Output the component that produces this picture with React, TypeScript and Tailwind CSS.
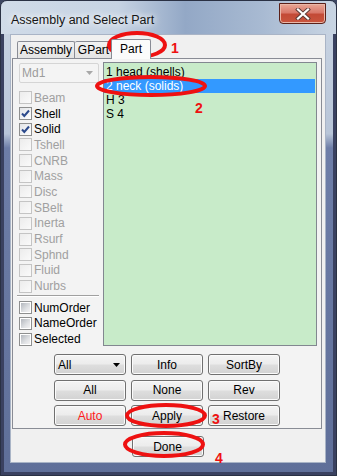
import React from "react";

type Kind = "disabled" | "checked" | "sunken";

const rows: { label: string; kind: Kind }[] = [
  { label: "Beam", kind: "disabled" },
  { label: "Shell", kind: "checked" },
  { label: "Solid", kind: "checked" },
  { label: "Tshell", kind: "disabled" },
  { label: "CNRB", kind: "disabled" },
  { label: "Mass", kind: "disabled" },
  { label: "Disc", kind: "disabled" },
  { label: "SBelt", kind: "disabled" },
  { label: "Inerta", kind: "disabled" },
  { label: "Rsurf", kind: "disabled" },
  { label: "Sphnd", kind: "disabled" },
  { label: "Fluid", kind: "disabled" },
  { label: "Nurbs", kind: "disabled" },
];

const orderRows: { label: string; kind: Kind }[] = [
  { label: "NumOrder", kind: "sunken" },
  { label: "NameOrder", kind: "sunken" },
  { label: "Selected", kind: "sunken" },
];

const parts = ["1 head (shells)", "2 neck (solids)", "H 3", "S 4"];

const btn =
  "flex h-[21px] w-[72px] items-center justify-center rounded-[3px] border border-[#707070] bg-[linear-gradient(180deg,#f4f4f4_0%,#ececec_48%,#dedede_52%,#d2d2d2_100%)] shadow-[inset_0_0_0_1px_#fbfbfb] text-[12px] text-black";

function Box({ kind }: { kind: Kind }) {
  if (kind === "disabled") {
    return <div className="h-[13px] w-[13px] shrink-0 border border-[#c4c4c4] bg-[linear-gradient(135deg,#ececec,#fafafa)]" />;
  }
  if (kind === "checked") {
    return (
      <div className="flex h-[13px] w-[13px] shrink-0 items-center justify-center border border-[#8e8f8f] bg-[linear-gradient(135deg,#e2e4e7,#ffffff)]">
        <svg width="11" height="11" viewBox="0 0 11 11">
          <path d="M2 5.5 L4.3 8 L9 2.5" fill="none" stroke="#2c4a8c" strokeWidth="2" />
        </svg>
      </div>
    );
  }
  return (
    <div className="flex h-[13px] w-[13px] shrink-0 items-center justify-center border border-[#8e8f8f] bg-white">
      <div className="h-[9px] w-[9px] bg-[linear-gradient(135deg,#b3b7bd,#dfe1e4_60%,#f3f3f3)]" />
    </div>
  );
}

function Check({ label, kind }: { label: string; kind: Kind }) {
  return (
    <div className="flex h-[15.7px] items-center gap-[2px]">
      <Box kind={kind} />
      <span className={kind === "disabled" ? "text-[#a0a0a0]" : "text-black"}>{label}</span>
    </div>
  );
}

export default function App() {
  return (
    <div className="relative h-[476px] w-[337px] overflow-hidden bg-[#3d4662] font-['Liberation_Sans',Arial,sans-serif] text-[12px] leading-[14px]">
      <div className="flex h-full flex-col rounded-t-[7px] border border-[#2a3144] bg-[linear-gradient(180deg,#cbd6e4_0%,#b8c5d8_28%,#6e7ea8_31%,#5f6f99_100%)] shadow-[inset_3px_0_0_#3a4160,inset_-3px_0_0_#3a4160,inset_0_-3px_0_#3a4160]">
        {/* title bar */}
        <div className="flex h-[33px] shrink-0 items-start rounded-t-[6px] bg-[linear-gradient(90deg,#d0dbe8_0%,#c6d3e3_35%,#93a8c6_55%,#a8bad2_78%,#c9d5e3_100%)]">
          <span className="pl-[10px] pt-[12px] text-[12.5px] text-[#151515] [text-shadow:0_0_6px_#fff,0_0_10px_#fff]">
            Assembly and Select Part
          </span>
          <div className="ml-auto mr-[10px] mt-[2px] flex h-[21px] w-[47px] items-center justify-center rounded-b-[4px] border border-[#5b2018] bg-[linear-gradient(180deg,#e9a896_0%,#d9786a_45%,#c34a36_55%,#c9553e_100%)] shadow-[inset_0_0_0_1px_#eab7a8]">
            <svg width="16" height="12" viewBox="0 0 16 12">
              <path d="M3 1.5 L13 10.5 M13 1.5 L3 10.5" stroke="#5a3a36" strokeWidth="4" strokeLinecap="square" />
              <path d="M3 1.5 L13 10.5 M13 1.5 L3 10.5" stroke="#ffffff" strokeWidth="2.2" strokeLinecap="square" />
            </svg>
          </div>
        </div>

        {/* client area */}
        <div className="mx-[9px] flex h-[429px] w-[316px] shrink-0 flex-col border border-[#a9b4c6] bg-[#f0f0f0]">
          {/* tab strip */}
          <div className="mt-[4px] flex h-[19px] items-end pl-[6px]">
            <div className="flex h-[17px] w-[58px] items-center justify-center rounded-t-[2px] border border-b-0 border-[#898c95] bg-[linear-gradient(180deg,#f2f2f2,#e3e3e3)]">
              Assembly
            </div>
            <div className="flex h-[17px] w-[38px] items-center justify-center rounded-t-[2px] border border-b-0 border-l-0 border-[#898c95] bg-[linear-gradient(180deg,#f2f2f2,#e3e3e3)]">
              GPart
            </div>
            <div className="relative z-10 -mb-px -ml-[2px] flex h-[20px] w-[40px] items-center justify-center rounded-t-[2px] border border-b-0 border-[#898c95] bg-[#fbfbfb] pb-[2px]">
              Part
            </div>
          </div>

          {/* tab page */}
          <div className="ml-[1px] flex h-[371px] w-[310px] flex-col border border-[#898c95] bg-[#f3f3f3]">
            <div className="flex pl-[6px] pt-[3px]">
              <div className="flex w-[84px] flex-col pt-[1px]">
                <div className="flex h-[20px] w-[80px] items-center justify-between rounded-[2px] border border-[#d5d5d5] bg-[#f4f4f4] pl-[2px] pr-[5px] text-[#9c9c9c]">
                  <span>Md1</span>
                  <svg width="7" height="4" viewBox="0 0 7 4">
                    <path d="M0 0 L7 0 L3.5 4 Z" fill="#a8a8a8" />
                  </svg>
                </div>
                <div className="mt-[7px] flex flex-col">
                  {rows.map((r) => (
                    <Check key={r.label} label={r.label} kind={r.kind} />
                  ))}
                </div>
                <div className="-ml-[2px] mb-[3px] mt-[1px] h-[2px] w-[82px] border-t border-b border-t-[#a0a0a0] border-b-white" />
                <div className="flex flex-col">
                  {orderRows.map((r) => (
                    <Check key={r.label} label={r.label} kind={r.kind} />
                  ))}
                </div>
              </div>

              <div className="h-[284px] w-[214px] border border-[#828790] bg-[#c8ebc9] pt-[2px]">
                {parts.map((p, i) => (
                  <div
                    key={p}
                    className={
                      i === 1
                        ? "mr-[1px] flex h-[14px] items-center bg-[#3399ff] pl-[2px] text-white"
                        : "flex h-[14px] items-center pl-[2px] text-black"
                    }
                  >
                    {p}
                  </div>
                ))}
              </div>
            </div>

            {/* buttons */}
            <div className="mt-[7px] grid grid-cols-[72px_72px_72px] justify-center gap-x-[5px] gap-y-[4.5px]">
              <div className={btn + " !justify-between pl-[3px] pr-[5px]"}>
                <span>All</span>
                <svg width="7" height="4" viewBox="0 0 7 4">
                  <path d="M0 0 L7 0 L3.5 4 Z" fill="#000" />
                </svg>
              </div>
              <div className={btn}>Info</div>
              <div className={btn}>SortBy</div>
              <div className={btn}>All</div>
              <div className={btn}>None</div>
              <div className={btn}>Rev</div>
              <div className={btn + " !text-[#ff1a1a]"}>Auto</div>
              <div className={btn}>Apply</div>
              <div className={btn}>Restore</div>
            </div>
          </div>

          <div className="mt-[7px] flex justify-center pr-[1px]">
            <div className={btn}>Done</div>
          </div>
        </div>
      </div>

      {/* annotations */}
      <svg className="pointer-events-none absolute inset-0" width="337" height="476" viewBox="0 0 337 476">
        <g fill="none" stroke="#ee1111" strokeWidth="4">
          <ellipse cx="137" cy="45" rx="28" ry="12" />
          <ellipse cx="151" cy="86" rx="54" ry="9" />
          <ellipse cx="166" cy="415.5" rx="39" ry="10.5" />
          <ellipse cx="164" cy="444.5" rx="39" ry="11.5" />
        </g>
        <g fill="#ee1111" fontFamily="'Liberation Sans', Arial, sans-serif" fontWeight="bold" fontSize="14">
          <text x="171" y="53">1</text>
          <text x="195" y="113">2</text>
          <text x="212" y="424">3</text>
          <text x="215" y="463">4</text>
        </g>
      </svg>
    </div>
  );
}
